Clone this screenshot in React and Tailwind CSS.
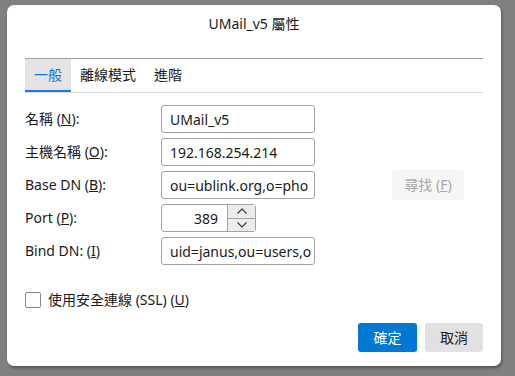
import React, { useState } from 'react';

const rows = [
  { label: '名稱', key: 'N', value: 'UMail_v5' },
  { label: '主機名稱', key: 'O', value: '192.168.254.214' },
  { label: 'Base DN', key: 'B', value: 'ou=ublink.org,o=pho', find: true },
  { label: 'Port', key: 'P', value: '389', port: true },
  { label: 'Bind DN:', key: 'I', value: 'uid=janus,ou=users,o', bind: true },
];

const Chevron = ({ up }) => (
  <svg width="12" height="8" viewBox="0 0 12 8" fill="none">
    <path
      d={up ? 'M1.5 6.5 L6 2 L10.5 6.5' : 'M1.5 1.5 L6 6 L10.5 1.5'}
      stroke="#333"
      strokeWidth="1.1"
    />
  </svg>
);

const App = () => {
  const [tab, setTab] = useState(0);
  const [ssl, setSsl] = useState(false);
  const tabs = ['一般', '離線模式', '進階'];

  return (
    <div className="w-[515px] h-[376px] bg-[#808080] pt-[5px] pl-[7px] font-['Noto_Sans','Noto_Sans_CJK_TC',sans-serif] text-[14px] text-[#1a1a1a]">
      <div className="w-[494px] h-[361px] bg-white rounded-[7px] shadow-[1px_2px_3px_rgba(0,0,0,0.35)] px-[18px] flex flex-col">
        {/* Title */}
        <div className="h-[53px] flex justify-center pt-[12px] leading-none">
          UMail_v5 屬性
        </div>

        {/* Tabs */}
        <div className="border-t border-[#a0a0a0] border-b border-b-[#dcdcdc] flex h-[35px]">
          {tabs.map((t, i) => (
            <button
              key={t}
              onClick={() => setTab(i)}
              className={`px-[9px] h-full flex items-center leading-none border-b-2 ${
                tab === i
                  ? 'bg-[#e4e4e4] text-[#1f73d1] border-[#1f7ae0]'
                  : 'border-transparent'
              }`}
            >
              {t}
            </button>
          ))}
        </div>

        {/* Form */}
        <div className="flex flex-col gap-[5px] mt-[12px]">
          {rows.map((r) => (
            <div key={r.key} className="flex items-center h-[28px]">
              <div className="w-[136px] leading-none">
                {r.label} (<u>{r.key}</u>){r.bind ? '' : ':'}
              </div>
              {r.port ? (
                <div className="w-[95px] h-[28px] border border-[#a3a3a3] rounded-[3px] flex">
                  <div className="flex-1 flex items-center justify-end pr-[9px]">{r.value}</div>
                  <div className="w-[28px] h-full border-l border-[#a3a3a3] flex flex-col">
                    <div className="flex-1 bg-[#ececec] flex items-center justify-center border-b border-[#a3a3a3]">
                      <Chevron up />
                    </div>
                    <div className="flex-1 bg-[#ececec] flex items-center justify-center">
                      <Chevron />
                    </div>
                  </div>
                </div>
              ) : (
                <div className="w-[154px] h-[28px] border border-[#a3a3a3] rounded-[3px] px-[8px] flex items-center overflow-hidden whitespace-nowrap">
                  {r.value}
                </div>
              )}
              {r.find && (
                <button className="ml-[77px] w-[72px] h-[30px] bg-[#f6f6f6] rounded-[3px] text-[#a8a8a8] leading-none">
                  尋找 (<u>F</u>)
                </button>
              )}
            </div>
          ))}
        </div>

        {/* SSL */}
        <label className="flex items-center mt-[27px] h-[16px] cursor-pointer">
          <input
            type="checkbox"
            checked={ssl}
            onChange={() => setSsl(!ssl)}
            className="appearance-none w-[16px] h-[16px] border border-[#8a8a8a] rounded-[2px] bg-white"
          />
          <span className="ml-[7px] leading-none">
            使用安全連線 (SSL) (<u>U</u>)
          </span>
        </label>

        {/* Buttons */}
        <div className="flex justify-end gap-[8px] mt-[15px]">
          <button className="w-[59px] h-[29px] bg-[#0078d4] text-white rounded-[3px] leading-none">
            確定
          </button>
          <button className="w-[58px] h-[29px] bg-[#e1e1e1] rounded-[3px] leading-none">
            取消
          </button>
        </div>
      </div>
    </div>
  );
};

export default App;
